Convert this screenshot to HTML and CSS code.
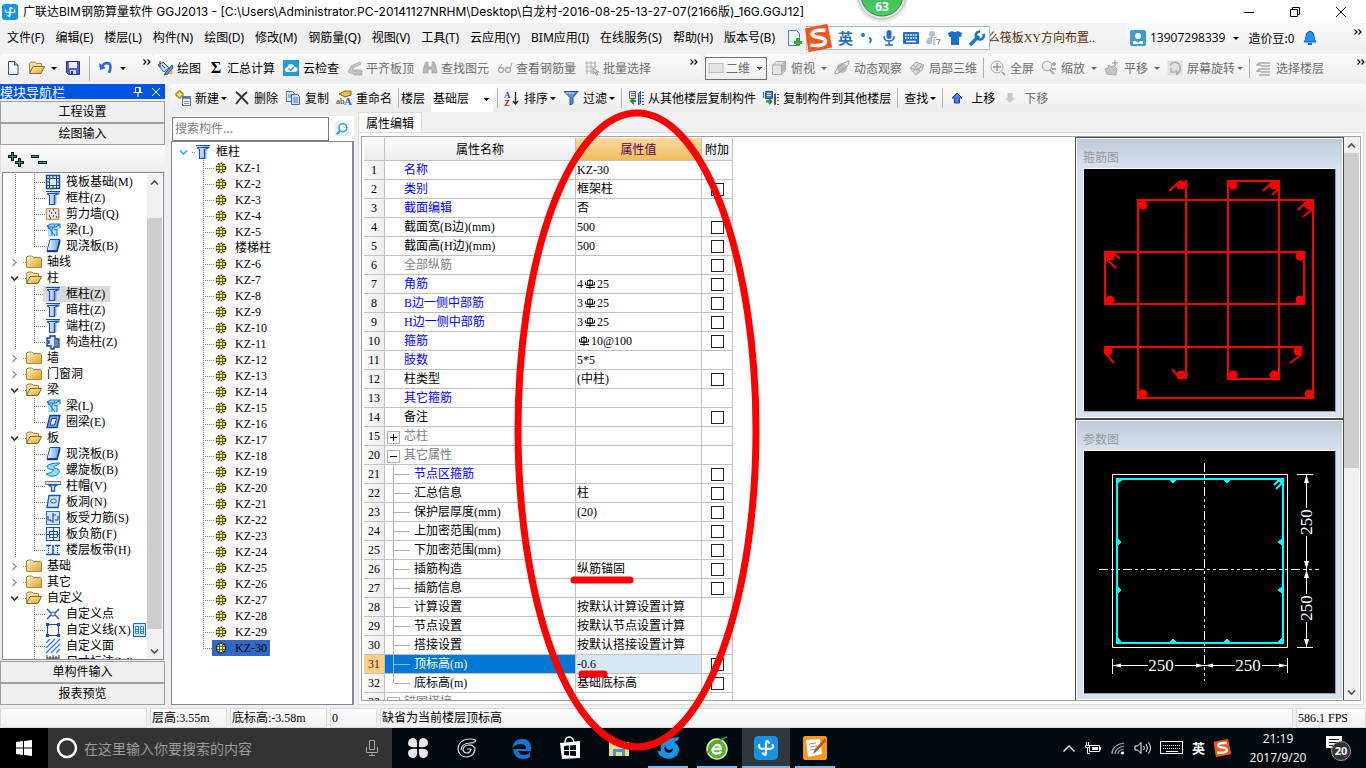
FILE: index.html
```html
<!DOCTYPE html>
<html lang="zh-CN">
<head>
<meta charset="utf-8">
<title>广联达BIM钢筋算量软件 GGJ2013</title>
<link rel="stylesheet" href="styles.css">
</head>
<body>
<svg class="defs" aria-hidden="true">
  <defs>
    <linearGradient id="gBlue" x1="0" x2="1"><stop offset="0" stop-color="#fff"/><stop offset="1" stop-color="#5b97ee"/></linearGradient>
    <linearGradient id="gFold" x1="0" y1="0" x2="1" y2="1"><stop offset="0" stop-color="#fff3c4"/><stop offset="1" stop-color="#e0a020"/></linearGradient>
    <linearGradient id="gGreen" x1="0" y1="0" x2="0" y2="1"><stop offset="0" stop-color="#2fb84a"/><stop offset="1" stop-color="#4ccc62"/></linearGradient>
    <symbol id="i-app" viewBox="0 0 16 16"><rect width="16" height="16" rx="3" fill="#1593e8"/><path d="M10 4.500Q8 2 8 5V11Q8 14 6 11.500M3.500 6Q3 8.500 5.500 8.500H11Q13.500 8.500 12.500 6" fill="none" stroke="#fff" stroke-width="1.400" stroke-linecap="round"/></symbol>
    <symbol id="i-column" viewBox="0 0 16 16"><path d="M1.500 1.500h13v3h-3v10h-7v-10h-3z" fill="url(#gBlue)"/><path d="M1 1.500h14M2 3.500h12M4.500 5v9.500h5V5M4 5l-2-1.500M10.500 5l3-1.500" fill="none" stroke="#1c50a4" stroke-width="1.200"/></symbol>
    <symbol id="i-raft" viewBox="0 0 16 16"><rect x="1.500" y="1.500" width="13" height="13" fill="#e6f2ff" stroke="#0d478d" stroke-width="1.500"/><path d="M4.500 2v12M11.500 2v12M2 4.500h12M2 11.500h12M8 2v3M8 11v3M2 8h3M11 8h3" stroke="#0d478d"/></symbol>
    <symbol id="i-wall" viewBox="0 0 16 16"><path d="M1.500 2.500h12v11h-12z" fill="#e2e2e2" stroke="#d8894c"/><path d="M13 5h2M13 8h2M13 11h2" stroke="#b55a20"/><path d="M4 5h1M8 4h1M6 7h1M10 7h1M4 10h1M8 10h1M11 11h1M5 12h1" stroke="#333" stroke-width="1.300"/></symbol>
    <symbol id="i-beam" viewBox="0 0 16 16"><path d="M2 5l3-3h10v4l-3 2v6H9V8L6 14H3V6z" fill="#a9dcff"/><path d="M2 5l3-3h10v4M2 5h9l4-3M3 6l4 2v6M9 7l3 1v6M2 3l8 11M7 7l3-4" fill="none" stroke="#187cc8" stroke-width="1.100"/></symbol>
    <symbol id="i-slab" viewBox="0 0 16 16"><path d="M5 1.500h10l-3 11H2z" fill="url(#gBlue)" stroke="#164fae"/><path d="M2 13.500h10l3-11" fill="none" stroke="#0b3b8c" stroke-width="1.500"/></symbol>
    <symbol id="i-ring" viewBox="0 0 16 16"><path d="M5 1.500h10l-3 12H2z" fill="#76a8ee" stroke="#0e3f96" stroke-width="1.300"/><path d="M7 4.500h4.500l-2 6.500H5z" fill="#fff" stroke="#0e3f96"/></symbol>
    <symbol id="i-spiral" viewBox="0 0 16 16"><path d="M15 1Q5 1 2 4Q1 7 9 8Q7 11 1 12Q6 16 12 13Q16 9 13 7Q7 6 9 4Q12 4 15 1z" fill="#8fdcff" stroke="#127cbc"/></symbol>
    <symbol id="i-cap" viewBox="0 0 16 16"><path d="M0 3.500h16v3H0z" fill="#ddd" stroke="#777"/><path d="M4 7h8l-2.500 2v4h-3V9z" fill="#fff" stroke="#1c50c0" stroke-width="1.400"/></symbol>
    <symbol id="i-hole" viewBox="0 0 16 16"><path d="M4 1.500h11l-2 12H2z" fill="#cfe0fb" stroke="#164fae" stroke-width="1.300"/><ellipse cx="8.500" cy="7" rx="2.800" ry="2" fill="#fff" stroke="#164fae"/></symbol>
    <symbol id="i-rebar" viewBox="0 0 16 16"><rect x="1.500" y="1.500" width="13" height="13" fill="#d6e5fb" stroke="#3a6fc8"/><path d="M3 6v4h3M8 3v10M13 6v4h-3M8 5h3M5 11h3" fill="none" stroke="#164fae" stroke-width="1.200"/></symbol>
    <symbol id="i-neg" viewBox="0 0 16 16"><rect x="1.500" y="1.500" width="13" height="13" fill="#e6f0ff" stroke="#164fae"/><path d="M8.500 2v12M4.500 5v6M12.500 5v6M4 5.500h8M2 8.500h12M4 11.500h8" stroke="#164fae"/></symbol>
    <symbol id="i-band" viewBox="0 0 16 16"><path d="M1 3h14v10H1z" fill="#e6f0ff"/><path d="M1 12.500h14M8 3v10M1 3.500h5M10 3.500h5" stroke="#164fae" stroke-width="1.500"/><path d="M3.500 4v9M12.500 4v9" stroke="#164fae" stroke-dasharray="1 1"/></symbol>
    <symbol id="i-struct" viewBox="0 0 16 16"><path d="M5 2h5v3h4v2h-2v2h2v4H9v2H6v-3H2V9h2V7H2V4h3z" fill="#d6e6ff" stroke="#0f3d86" stroke-width="1.300"/><path d="M9 6v6h4V6z" fill="#5b87cc"/></symbol>
    <symbol id="i-pt" viewBox="0 0 16 16"><path d="M2 3l4 4M14 3l-4 4M2 13l4-4M14 13l-4-4" stroke="#164fae" stroke-width="1.400"/><circle cx="8" cy="8" r="2" fill="none" stroke="#164fae"/></symbol>
    <symbol id="i-line" viewBox="0 0 16 16"><rect x="2.500" y="2.500" width="11" height="11" fill="#fff" stroke="#164fae"/><path d="M1 1h3v3H1zM12 1h3v3h-3zM1 12h3v3H1zM12 12h3v3h-3z" fill="#164fae"/></symbol>
    <symbol id="i-hatch" viewBox="0 0 16 16"><path d="M1 5l4-4M1 10l9-9M1 15L15 1M6 15l9-9M11 15l4-4" stroke="#3273cf" stroke-width="1.200"/></symbol>
    <symbol id="i-dim" viewBox="0 0 16 16"><path d="M2 1v8M14 1v8M2 4h12M5 2v5M8 1v8M11 2v5" stroke="#333"/></symbol>
    <symbol id="i-folder" viewBox="0 0 16 16"><path d="M.5 3.500L2 2h4l1.500 1.500h7L15.500 5v8.500H.5z" fill="url(#gFold)" stroke="#a8843c"/></symbol>
    <symbol id="i-fopen" viewBox="0 0 16 16"><path d="M.5 12.500V3.500L2 2h4l1.500 1.500h5V6" fill="#f7dc8a" stroke="#a8843c"/><path d="M.5 13.500L4 6.500h11.500L12 13.500z" fill="url(#gFold)" stroke="#8d6a24"/></symbol>
    <symbol id="i-gear" viewBox="0 0 12 12"><circle cx="6" cy="6" r="4" fill="#f2e81c"/><circle cx="6" cy="6" r="4.700" fill="none" stroke="#111" stroke-width="1.400" stroke-dasharray="1.700 1.300"/><path d="M4.500 2v8M7.500 2v8M2 4.500h8M2 7.500h8" stroke="#4a4610" stroke-width=".8"/><path d="M5 5h2v2H5z" fill="#fff"/></symbol>
    <symbol id="i-right" viewBox="0 0 9 9"><path d="M2.500 1L6 4.500 2.500 8" fill="none" stroke="#999" stroke-width="1.500"/></symbol>
    <symbol id="i-down" viewBox="0 0 9 9"><path d="M1 2.500L4.500 6 8 2.500" fill="none" stroke="currentColor" stroke-width="1.700"/></symbol>
    <symbol id="i-up" viewBox="0 0 9 9"><path d="M1 6.500L4.500 3 8 6.500" fill="none" stroke="#505050" stroke-width="1.700"/></symbol>
    <symbol id="i-more" viewBox="0 0 8 6"><path d="M.5.5L3 3 .5 5.500M4.500.5L7 3 4.500 5.500" fill="none" stroke="#000" stroke-width="1.200"/></symbol>
    <symbol id="i-new" viewBox="0 0 16 16"><path d="M3.500 1.500h6l3.500 3.500v9.500H3.500z" fill="#f3f8ff" stroke="#3c4a66"/><path d="M9.500 1.500V5H13" fill="#b9cdea" stroke="#3c4a66"/></symbol>
    <symbol id="i-save" viewBox="0 0 16 16"><path d="M1.500 1.500h13v13h-11l-2-2z" fill="#4d5fd0" stroke="#28338c"/><path d="M4 2h8v6H4z" fill="#eef"/><path d="M5 10h6v4H5z" fill="#d5d8e8"/><path d="M6 11h2v3H6z" fill="#28338c"/></symbol>
    <symbol id="i-undo" viewBox="0 0 16 16"><path d="M4 6Q7 2 11 3.500Q14 6 11 13" fill="none" stroke="#2f6bd0" stroke-width="2.600"/><path d="M1 3l1 7 6-2z" fill="#2f6bd0"/></symbol>
    <symbol id="i-paint" viewBox="0 0 16 16"><path d="M1 5l5-3 6 6-5 4z" fill="#c8d8ee" stroke="#36557f"/><path d="M3 1v6M5 5l3 3" stroke="#333"/><path d="M15 5l-6 7-2 3 4-1 5-6z" fill="#5d9be6" stroke="#24559a"/><path d="M12 13l3-3 1 3-2 2z" fill="#e9b633"/></symbol>
    <symbol id="i-cloud" viewBox="0 0 16 16"><rect width="16" height="16" fill="#2698e0"/><path d="M4 12Q1 11 2 8.500 3 7 4.500 7 5 4 8 4q3 0 3.500 3Q15 7 14.500 10 14 12 12 12z" fill="#fff"/><path d="M5.500 8.500l2 2L11 7" fill="none" stroke="#2698e0" stroke-width="1.300"/></symbol>
    <symbol id="g-flush" viewBox="0 0 16 16"><path d="M1 12l3-6 9-4 1 2-8 4v6zM7 10h8v2H7zM7 13h8v2H7z" fill="#c6c6c6" stroke="#a8a8a8" stroke-width=".8"/></symbol>
    <symbol id="g-find" viewBox="0 0 16 16"><path d="M2 7l2-5h2v5h4V2h2l2 5 1 6h-5V9H6v4H1z" fill="#bbb" stroke="#999" stroke-width=".7"/></symbol>
    <symbol id="g-glass" viewBox="0 0 16 16"><circle cx="4" cy="10" r="2.500" fill="none" stroke="#aaa" stroke-width="1.300"/><circle cx="11" cy="10" r="2.500" fill="none" stroke="#aaa" stroke-width="1.300"/><path d="M6 10h3M2 8l3-4M13 9l2-6" stroke="#aaa"/></symbol>
    <symbol id="g-batch" viewBox="0 0 16 16"><path d="M1 3h11M1 7h11M1 11h7M3 1v13M7 1v13M11 1v7" stroke="#b0b0b0"/><path d="M9 8l6 4-3 0 2 3-2 0-1-3-2 2z" fill="#ddd" stroke="#999"/></symbol>
    <symbol id="g-rect" viewBox="0 0 16 16"><rect x="1" y="3.500" width="14" height="9" fill="#e4e4e4" stroke="#bbb"/></symbol>
    <symbol id="g-cube" viewBox="0 0 16 16"><path d="M1.500 5l4-3.500h9v9l-4 4h-9z" fill="#e4e4e4" stroke="#aaa"/><path d="M1.500 5h9v9.500M10.500 5l4-3.500" fill="none" stroke="#aaa"/><path d="M11 5l3-3v8l-3 3z" fill="#b8b8b8"/></symbol>
    <symbol id="g-orbit" viewBox="0 0 16 16"><circle cx="8" cy="8" r="5" fill="#bcbcbc"/><path d="M1 14Q0 11 6 6t9-5Q16 4 10 9T1 14z" fill="none" stroke="#989898"/></symbol>
    <symbol id="g-local" viewBox="0 0 16 16"><path d="M1 8l6-6 8 3-2 5-6 5z" fill="#ddd" stroke="#aaa"/><path d="M4 5l7 6M10 3l-6 9M13 4l-5 9M2 8l6 2 6-4" fill="none" stroke="#aaa"/></symbol>
    <symbol id="g-full" viewBox="0 0 16 16"><circle cx="7" cy="7" r="6" fill="#eee" stroke="#aaa"/><path d="M7 3v8M3 7h8M12 12l3 3" stroke="#999" stroke-width="1.500"/></symbol>
    <symbol id="g-zoom" viewBox="0 0 16 16"><circle cx="6" cy="6" r="4.700" fill="#eee" stroke="#b0b0b0" stroke-width="1.300"/><path d="M9 10l4 4M11 4h4M13 2v4M11 9h4" stroke="#aaa" stroke-width="1.800"/></symbol>
    <symbol id="g-pan" viewBox="0 0 16 16"><path d="M3 14l-2-5 3-1 1-3 2 2 3-1 3 3-1 6z" fill="#c4c4c4" stroke="#aaa"/><path d="M11 0v6M8 3h6" stroke="#999"/></symbol>
    <symbol id="g-rot" viewBox="0 0 16 16"><rect x=".5" y=".5" width="15" height="15" fill="#e2e2e2"/><path d="M3 5Q7 0 12 4 15 9 11 13M13 11l-3 3-1-4M4 8v4h4" fill="none" stroke="#aaa" stroke-width="1.500"/></symbol>
    <symbol id="g-floors" viewBox="0 0 16 16"><path d="M3 3h11M5 6h9M3 9h11M5 12h9M3 15h11M3 3L1 5h4M3 9l-2 2h4" stroke="#aaa" fill="none" stroke-width="1.300"/></symbol>
    <symbol id="i-add" viewBox="0 0 16 16"><path d="M3 1h3v2h2v3H6v2H3V6H1V3h2z" fill="#ffe36b" stroke="#94700c"/><path d="M7.500 6.500h8v9h-8z" fill="#fff" stroke="#5472a8"/><path d="M8 7h7v2H8z" fill="#4c83d8"/><path d="M9 11.500h5M9 13.500h5" stroke="#89a"/></symbol>
    <symbol id="i-del" viewBox="0 0 16 16"><path d="M2 2Q7 6 14 14M13 2Q8 6 2 14" fill="none" stroke="#333" stroke-width="1.900"/></symbol>
    <symbol id="i-copy" viewBox="0 0 16 16"><path d="M1.500 1.500h6l2 2v8h-8z" fill="#e9f2ff" stroke="#4a78bb"/><path d="M6.500 4.500h6l2 2v8h-8z" fill="#cfe1fa" stroke="#3567b4"/><path d="M3 5h3M3 7h3M8 8h5M8 10h5M8 12h5" stroke="#4a78bb"/></symbol>
    <symbol id="i-ren" viewBox="0 0 16 16"><path d="M3 4l6-3h6v4l-6 2z" fill="#e8c144" stroke="#83650f"/><text x="0" y="14" font-family="Liberation Serif" font-size="9" fill="#222">ab</text><text x="8" y="15" font-family="Liberation Serif" font-size="11" font-weight="bold" fill="#2a62c4">A</text></symbol>
    <symbol id="i-sort" viewBox="0 0 16 16"><text x="0" y="8" font-family="Liberation Serif" font-size="9" font-weight="bold" fill="#2449a8">A</text><text x="0" y="16" font-family="Liberation Serif" font-size="9" font-weight="bold" fill="#a11c2c">Z</text><path d="M11.500 2v11M9 11l2.500 3 2.500-3" fill="none" stroke="#222" stroke-width="1.300"/></symbol>
    <symbol id="i-filter" viewBox="0 0 16 16"><path d="M1 1.500h14l-5 6v6l-3 1.500V7.500z" fill="#5b8eea" stroke="#2350a8"/><path d="M3 3h8" stroke="#cfe0ff"/></symbol>
    <symbol id="i-from" viewBox="0 0 16 16"><path d="M1.500 1.500h6v7h-6z" fill="#e0e4ea" stroke="#667"/><path d="M3 3.500h4M3 5.500h4" stroke="#778"/><path d="M10.500 3.500l2-2v12l-2 1zM14 2.500h2M14 5.500h2M14 8.500h2M14 11.500h2M14 14.500h2" fill="#7fa4e6" stroke="#2d53a0"/><path d="M8 11H4M6 8l-3 3 3 3" fill="none" stroke="#23903a" stroke-width="1.800"/></symbol>
    <symbol id="i-to" viewBox="0 0 16 16"><path d="M2.500 1.500h7v7h-7z" fill="#4c79cf" stroke="#2a4c94"/><path d="M4 3.500h4M4 5.500h4" stroke="#dfe9fb"/><path d="M.5 2v6M11.500 4.500l1-1v11l-1 0zM14 4.500h2M14 7.500h2M14 10.500h2M14 14.500h2" fill="#8b98ac" stroke="#4c5a70"/><path d="M3 11.500h5M6 9l2.500 2.500L6 14" fill="none" stroke="#23903a" stroke-width="1.800"/></symbol>
    <symbol id="i-mup" viewBox="0 0 12 12"><path d="M6 1l5 5H8.500v5h-5V6H1z" fill="#4a7ee8" stroke="#1a3f9c"/></symbol>
    <symbol id="i-mdn" viewBox="0 0 12 12"><path d="M6 11l5-5H8.500V1h-5v5H1z" fill="#c8c8c8"/></symbol>
    <symbol id="i-mag" viewBox="0 0 16 16"><rect width="16" height="16" fill="#dff0fc"/><circle cx="9" cy="6.500" r="4.500" fill="#fff" stroke="#3f9bdc" stroke-width="1.800"/><path d="M6 10l-4 4" stroke="#3f9bdc" stroke-width="2.400"/></symbol>
    <symbol id="i-s" viewBox="0 0 26 26"><path d="M2 5L21 1l4 20-20 4z" fill="#f2561d" stroke="#f2561d" stroke-width="2" stroke-linejoin="round"/><path d="M20 6Q8 5 7.500 9.500 8 12 14 12.500 21 13.500 19.500 17.500 17 21 6 19.500" fill="none" stroke="#fff" stroke-width="3.500"/></symbol>
    <symbol id="i-mark" viewBox="0 0 12 10"><path d="M3.500 1.500h5v5h-5zM6 0v10M2 8.500h9M1.500 3v3h9V3" fill="none" stroke="#000" stroke-width=".9"/></symbol>
  </defs>
</svg>

<header class="titlebar">
  <svg class="i16"><use href="#i-app"/></svg>
  <h1>广联达BIM钢筋算量软件 GGJ2013 - [C:\Users\Administrator.PC-20141127NRHM\Desktop\白龙村-2016-08-25-13-27-07(2166版)_16G.GGJ12]</h1>
  <div class="winbtns">
    <button aria-label="最小化"><svg width="12" height="12"><path d="M1 6.500h10" stroke="#000"/></svg></button>
    <button aria-label="还原"><svg width="12" height="12" fill="none" stroke="#000"><path d="M1.500 3.500h7v7h-7zM3.500 3.500v-2h7v7h-2"/></svg></button>
    <button aria-label="关闭"><svg width="12" height="12"><path d="M1 1l10 10M11 1L1 11" stroke="#000"/></svg></button>
  </div>
  <svg class="score" width="54" height="24"><circle cx="27" cy="-4" r="26" fill="#999" opacity=".25"/><circle cx="27" cy="-5" r="24" fill="#e6e6e6" stroke="#bbb"/><circle cx="27" cy="-5" r="21" fill="url(#gGreen)" stroke="#3b7f48"/><text x="27" y="11" text-anchor="middle">63</text></svg>
</header>

<div class="menubar">
  <nav class="menu">
    <button>文件(F)</button><button>编辑(E)</button><button>楼层(L)</button><button>构件(N)</button><button>绘图(D)</button><button>修改(M)</button><button>钢筋量(Q)</button><button>视图(V)</button><button>工具(T)</button><button>云应用(Y)</button><button>BIM应用(I)</button><button>在线服务(S)</button><button>帮助(H)</button><button>版本号(B)</button>
    <svg class="i16" viewBox="0 0 16 16"><path d="M2.500.5h8l3 3v12h-11z" fill="#eaf5ff" stroke="#3f86bb"/><path d="M10 8h3v3h3v3h-3v2h-3v-2H8v-3h2z" fill="#3faa28"/></svg>
  </nav>
  <a class="tip" href="#">么筏板XY方向布置..</a>
  <div class="user">
    <svg class="i16" viewBox="0 0 16 16"><rect width="16" height="16" rx="2" fill="#3f9bc9"/><circle cx="8" cy="6" r="3" fill="#fff"/><path d="M3 14V11h3l2 2 2-2h3v3z" fill="#fff"/></svg>
    <button class="phone">13907298339</button><i class="caret"></i>
    <span class="beans">造价豆:0</span>
    <svg class="i16" viewBox="0 0 16 16"><path d="M2 12Q4 10 4 6 4 2 8 1q4 1 4 5 0 4 2 6z" fill="#1e90ff" stroke="#0d5fc0"/><path d="M6 14h4" stroke="#1e70d0" stroke-width="2"/></svg>
    <svg class="more"><use href="#i-more"/></svg>
  </div>
  <div class="ime">
    <svg class="ime-logo"><use href="#i-s"/></svg>
    <b>英</b>
    <svg class="i16" viewBox="0 0 16 16"><circle cx="4" cy="5" r="2" fill="#1c70c8"/><path d="M10 8q3 0 1 5" fill="none" stroke="#1c70c8" stroke-width="2"/></svg>
    <svg class="i16" viewBox="0 0 16 16"><rect x="5.500" width="5" height="9" rx="2.500" fill="#1c70c8"/><path d="M3 6q0 5 5 5t5-5M8 11v4M4 15h8" fill="none" stroke="#1c70c8" stroke-width="1.500"/></svg>
    <svg class="i16" viewBox="0 0 16 16"><rect y="2" width="16" height="12" rx="1" fill="#1c70c8"/><path d="M2 5h12M2 8h12" stroke="#fff" stroke-width="1.600" stroke-dasharray="1.600 1"/><path d="M3 11.500h10" stroke="#fff" stroke-width="1.500"/></svg>
    <svg class="i16" viewBox="0 0 16 16"><circle cx="7" cy="4" r="3" fill="#aebfdc"/><path d="M1 13q0-6 6-6t6 2v5H3z" fill="#aebfdc"/><rect x="7" y="8" width="9" height="7" fill="#fff"/><path d="M9 9v6M11 9.500h4l-2 5" fill="none" stroke="#8aa0c4" stroke-width="1.200"/></svg>
    <svg class="i16" viewBox="0 0 16 16"><path d="M1 3l4-2q3 2 6 0l4 2-1 4h-2v8H4V7H2z" fill="#1c70c8"/></svg>
    <svg class="i16" viewBox="0 0 16 16"><path d="M2 14l7-7" stroke="#1c70c8" stroke-width="3.200" stroke-linecap="round"/><path d="M14.500 4A4 4 0 1 1 11 1.500" fill="none" stroke="#1c70c8" stroke-width="2.600"/></svg>
  </div>
</div>

<div class="toolbar">
  <div class="group g-file">
    <button class="tb" aria-label="新建"><svg class="i16"><use href="#i-new"/></svg></button>
    <button class="tb" aria-label="打开"><svg class="i16"><use href="#i-fopen"/></svg><i class="caret"></i></button>
    <button class="tb" aria-label="保存"><svg class="i16"><use href="#i-save"/></svg></button>
    <i class="sep"></i>
    <button class="tb" aria-label="撤销"><svg class="i16"><use href="#i-undo"/></svg><i class="caret"></i></button>
    <svg class="more"><use href="#i-more"/></svg>
  </div>
  <div class="group g-tools">
    <button class="tb"><svg class="i16"><use href="#i-paint"/></svg>绘图</button>
    <button class="tb"><b class="sigma">Σ</b>汇总计算</button>
    <button class="tb"><svg class="i16"><use href="#i-cloud"/></svg>云检查</button>
    <button class="tb" disabled><svg class="i16"><use href="#g-flush"/></svg>平齐板顶</button>
    <button class="tb" disabled><svg class="i16"><use href="#g-find"/></svg>查找图元</button>
    <button class="tb" disabled><svg class="i16"><use href="#g-glass"/></svg>查看钢筋量</button>
    <button class="tb" disabled><svg class="i16"><use href="#g-batch"/></svg>批量选择</button>
    <svg class="more"><use href="#i-more"/></svg>
  </div>
  <div class="group g-view">
    <label class="viewsel"><svg class="i16"><use href="#g-rect"/></svg><select aria-label="视图" disabled><option>二维</option></select></label>
    <button class="tb" disabled><svg class="i16"><use href="#g-cube"/></svg>俯视<i class="caret wide"></i></button>
    <button class="tb" disabled><svg class="i16"><use href="#g-orbit"/></svg>动态观察</button>
    <button class="tb" disabled><svg class="i16"><use href="#g-local"/></svg>局部三维</button>
    <i class="sep"></i>
    <button class="tb" disabled><svg class="i16"><use href="#g-full"/></svg>全屏</button>
    <button class="tb" disabled><svg class="i16"><use href="#g-zoom"/></svg>缩放<i class="caret wide"></i></button>
    <button class="tb" disabled><svg class="i16"><use href="#g-pan"/></svg>平移<i class="caret wide"></i></button>
    <button class="tb" disabled><svg class="i16"><use href="#g-rot"/></svg>屏幕旋转<i class="caret"></i></button>
    <i class="sep"></i>
    <button class="tb" disabled><svg class="i16"><use href="#g-floors"/></svg>选择楼层</button>
    <svg class="more"><use href="#i-more"/></svg>
  </div>
</div>

<main class="main">
  <aside class="nav">
    <div class="nav-head"><h2>模块导航栏</h2>
      <svg width="12" height="12" fill="none" stroke="#fff"><path d="M3.500 1.500h5v5h-5zM7.500 2v4M1.500 6.500h9M6 7v4"/></svg>
      <svg width="12" height="12" stroke="#fff"><path d="M2 2l8 8M10 2l-8 8"/></svg>
    </div>
    <button class="bar">工程设置</button>
    <button class="bar">绘图输入</button>
    <div class="expand">
      <svg width="18" height="16"><path d="M1 5.500h9M5.500 1v9M8 11.500h9M12.500 7v9" stroke="#111" stroke-width="3"/><path d="M2 5.500h7M5.500 2v7M9 11.500h7M12.500 8v7" stroke="#1a9a92"/></svg>
      <svg width="18" height="16"><path d="M1 5.500h8M8 11.500h9" stroke="#111" stroke-width="3"/><path d="M2 5.500h6M9 11.500h7" stroke="#1a9a92"/></svg>
    </div>
    <div class="tree">
      <ul>
        <li class="leaf"><svg class="i16"><use href="#i-raft"/></svg>筏板基础(M)</li>
        <li class="leaf"><svg class="i16"><use href="#i-column"/></svg>框柱(Z)</li>
        <li class="leaf"><svg class="i16"><use href="#i-wall"/></svg>剪力墙(Q)</li>
        <li class="leaf"><svg class="i16"><use href="#i-beam"/></svg>梁(L)</li>
        <li class="leaf last"><svg class="i16"><use href="#i-slab"/></svg>现浇板(B)</li>
        <li class="node"><svg class="i9"><use href="#i-right"/></svg><svg class="i16"><use href="#i-folder"/></svg>轴线</li>
        <li class="node"><svg class="i9"><use href="#i-down"/></svg><svg class="i16"><use href="#i-fopen"/></svg>柱</li>
        <li class="leaf"><span class="cur"><svg class="i16"><use href="#i-column"/></svg>框柱(Z)</span></li>
        <li class="leaf"><svg class="i16"><use href="#i-column"/></svg>暗柱(Z)</li>
        <li class="leaf"><svg class="i16"><use href="#i-column"/></svg>端柱(Z)</li>
        <li class="leaf last"><svg class="i16"><use href="#i-struct"/></svg>构造柱(Z)</li>
        <li class="node"><svg class="i9"><use href="#i-right"/></svg><svg class="i16"><use href="#i-folder"/></svg>墙</li>
        <li class="node"><svg class="i9"><use href="#i-right"/></svg><svg class="i16"><use href="#i-folder"/></svg>门窗洞</li>
        <li class="node"><svg class="i9"><use href="#i-down"/></svg><svg class="i16"><use href="#i-fopen"/></svg>梁</li>
        <li class="leaf"><svg class="i16"><use href="#i-beam"/></svg>梁(L)</li>
        <li class="leaf last"><svg class="i16"><use href="#i-ring"/></svg>圈梁(E)</li>
        <li class="node"><svg class="i9"><use href="#i-down"/></svg><svg class="i16"><use href="#i-fopen"/></svg>板</li>
        <li class="leaf"><svg class="i16"><use href="#i-slab"/></svg>现浇板(B)</li>
        <li class="leaf"><svg class="i16"><use href="#i-spiral"/></svg>螺旋板(B)</li>
        <li class="leaf"><svg class="i16"><use href="#i-cap"/></svg>柱帽(V)</li>
        <li class="leaf"><svg class="i16"><use href="#i-hole"/></svg>板洞(N)</li>
        <li class="leaf"><svg class="i16"><use href="#i-rebar"/></svg>板受力筋(S)</li>
        <li class="leaf"><svg class="i16"><use href="#i-neg"/></svg>板负筋(F)</li>
        <li class="leaf last"><svg class="i16"><use href="#i-band"/></svg>楼层板带(H)</li>
        <li class="node"><svg class="i9"><use href="#i-right"/></svg><svg class="i16"><use href="#i-folder"/></svg>基础</li>
        <li class="node"><svg class="i9"><use href="#i-right"/></svg><svg class="i16"><use href="#i-folder"/></svg>其它</li>
        <li class="node"><svg class="i9"><use href="#i-down"/></svg><svg class="i16"><use href="#i-fopen"/></svg>自定义</li>
        <li class="leaf end"><svg class="i16"><use href="#i-pt"/></svg>自定义点</li>
        <li class="leaf end"><svg class="i16"><use href="#i-line"/></svg>自定义线(X)<svg class="pages" width="13" height="14"><path d="M.5.5h12v13H.5z" fill="#cfe6ff" stroke="#1668b8"/><path d="M2.500 3.500h3v7h-3zM7.500 3.500h3v7h-3z" fill="#fff" stroke="#1e88e5"/><path d="M3 6.500h2M3 8.500h2M8 6.500h2M8 8.500h2" stroke="#1e88e5"/></svg></li>
        <li class="leaf end"><svg class="i16"><use href="#i-hatch"/></svg>自定义面</li>
        <li class="leaf end"><svg class="i16"><use href="#i-dim"/></svg>尺寸标注(W)</li>
      </ul>
      <div class="sb sb-nav"><span class="cap"><svg class="i9"><use href="#i-up"/></svg></span><i class="pre"></i><i class="thumb"></i><i class="post"></i><span class="cap"><svg class="i9"><use href="#i-down"/></svg></span></div>
    </div>
    <button class="bar">单构件输入</button>
    <button class="bar">报表预览</button>
  </aside>

  <div class="work">
    <div class="toolbar2">
      <button class="tb"><svg class="i16"><use href="#i-add"/></svg>新建<i class="caret"></i></button>
      <button class="tb"><svg class="i16"><use href="#i-del"/></svg>删除</button>
      <button class="tb"><svg class="i16"><use href="#i-copy"/></svg>复制</button>
      <button class="tb"><svg class="i16"><use href="#i-ren"/></svg>重命名</button>
      <i class="sep"></i>
      <label class="floor">楼层<select><option>基础层</option></select></label>
      <i class="sep"></i>
      <button class="tb"><svg class="i16"><use href="#i-sort"/></svg>排序<i class="caret"></i></button>
      <button class="tb"><svg class="i16"><use href="#i-filter"/></svg>过滤<i class="caret"></i></button>
      <i class="sep"></i>
      <button class="tb"><svg class="i16"><use href="#i-from"/></svg>从其他楼层复制构件</button>
      <button class="tb"><svg class="i16"><use href="#i-to"/></svg>复制构件到其他楼层</button>
      <i class="sep"></i>
      <button class="tb">查找<i class="caret"></i></button>
      <i class="sep"></i>
      <button class="tb move"><svg class="i12"><use href="#i-mup"/></svg>上移</button>
      <button class="tb move" disabled><svg class="i12"><use href="#i-mdn"/></svg>下移</button>
    </div>

    <div class="panes">
      <section class="parts">
        <div class="search"><input type="text" placeholder="搜索构件..." aria-label="搜索构件"><button aria-label="搜索"><svg class="i14"><use href="#i-mag"/></svg></button></div>
        <ul class="partlist">
          <li class="root"><svg class="i9"><use href="#i-down"/></svg><svg class="i16"><use href="#i-column"/></svg>框柱</li>
          <li><span><svg class="i12"><use href="#i-gear"/></svg>KZ-1</span></li>
          <li><span><svg class="i12"><use href="#i-gear"/></svg>KZ-2</span></li>
          <li><span><svg class="i12"><use href="#i-gear"/></svg>KZ-3</span></li>
          <li><span><svg class="i12"><use href="#i-gear"/></svg>KZ-4</span></li>
          <li><span><svg class="i12"><use href="#i-gear"/></svg>KZ-5</span></li>
          <li><span><svg class="i12"><use href="#i-gear"/></svg>楼梯柱</span></li>
          <li><span><svg class="i12"><use href="#i-gear"/></svg>KZ-6</span></li>
          <li><span><svg class="i12"><use href="#i-gear"/></svg>KZ-7</span></li>
          <li><span><svg class="i12"><use href="#i-gear"/></svg>KZ-8</span></li>
          <li><span><svg class="i12"><use href="#i-gear"/></svg>KZ-9</span></li>
          <li><span><svg class="i12"><use href="#i-gear"/></svg>KZ-10</span></li>
          <li><span><svg class="i12"><use href="#i-gear"/></svg>KZ-11</span></li>
          <li><span><svg class="i12"><use href="#i-gear"/></svg>KZ-12</span></li>
          <li><span><svg class="i12"><use href="#i-gear"/></svg>KZ-13</span></li>
          <li><span><svg class="i12"><use href="#i-gear"/></svg>KZ-14</span></li>
          <li><span><svg class="i12"><use href="#i-gear"/></svg>KZ-15</span></li>
          <li><span><svg class="i12"><use href="#i-gear"/></svg>KZ-16</span></li>
          <li><span><svg class="i12"><use href="#i-gear"/></svg>KZ-17</span></li>
          <li><span><svg class="i12"><use href="#i-gear"/></svg>KZ-18</span></li>
          <li><span><svg class="i12"><use href="#i-gear"/></svg>KZ-19</span></li>
          <li><span><svg class="i12"><use href="#i-gear"/></svg>KZ-20</span></li>
          <li><span><svg class="i12"><use href="#i-gear"/></svg>KZ-21</span></li>
          <li><span><svg class="i12"><use href="#i-gear"/></svg>KZ-22</span></li>
          <li><span><svg class="i12"><use href="#i-gear"/></svg>KZ-23</span></li>
          <li><span><svg class="i12"><use href="#i-gear"/></svg>KZ-24</span></li>
          <li><span><svg class="i12"><use href="#i-gear"/></svg>KZ-25</span></li>
          <li><span><svg class="i12"><use href="#i-gear"/></svg>KZ-26</span></li>
          <li><span><svg class="i12"><use href="#i-gear"/></svg>KZ-27</span></li>
          <li><span><svg class="i12"><use href="#i-gear"/></svg>KZ-28</span></li>
          <li><span><svg class="i12"><use href="#i-gear"/></svg>KZ-29</span></li>
          <li class="last"><span class="sel"><svg class="i12"><use href="#i-gear"/></svg>KZ-30</span></li>
        </ul>
      </section>

      <section class="editor">
        <button class="tab">属性编辑</button>
        <div class="sheet">
          <div class="frame">
            <div class="gridwrap">
              <table class="props">
                <colgroup><col class="c-no"><col class="c-name"><col class="c-val"><col class="c-add"></colgroup>
                <thead><tr><th></th><th>属性名称</th><th class="hot">属性值</th><th>附加</th></tr></thead>
                <tbody>
                  <tr><th>1</th><td class="key">名称</td><td>KZ-30</td><td></td></tr>
                  <tr><th>2</th><td class="key">类别</td><td>框架柱</td><td><input type="checkbox" aria-label="附加 类别"></td></tr>
                  <tr><th>3</th><td class="key">截面编辑</td><td>否</td><td></td></tr>
                  <tr><th>4</th><td>截面宽(B边)(mm)</td><td>500</td><td><input type="checkbox" aria-label="附加 截面宽"></td></tr>
                  <tr><th>5</th><td>截面高(H边)(mm)</td><td>500</td><td><input type="checkbox" aria-label="附加 截面高"></td></tr>
                  <tr><th>6</th><td class="dim">全部纵筋</td><td></td><td><input type="checkbox" aria-label="附加 全部纵筋"></td></tr>
                  <tr><th>7</th><td class="key">角筋</td><td>4<svg class="mark"><use href="#i-mark"/></svg>25</td><td><input type="checkbox" aria-label="附加 角筋"></td></tr>
                  <tr><th>8</th><td class="key">B边一侧中部筋</td><td>3<svg class="mark"><use href="#i-mark"/></svg>25</td><td><input type="checkbox" aria-label="附加 B边一侧中部筋"></td></tr>
                  <tr><th>9</th><td class="key">H边一侧中部筋</td><td>3<svg class="mark"><use href="#i-mark"/></svg>25</td><td><input type="checkbox" aria-label="附加 H边一侧中部筋"></td></tr>
                  <tr><th>10</th><td class="key">箍筋</td><td><svg class="mark"><use href="#i-mark"/></svg>10@100</td><td><input type="checkbox" aria-label="附加 箍筋"></td></tr>
                  <tr><th>11</th><td class="key">肢数</td><td>5*5</td><td></td></tr>
                  <tr><th>12</th><td>柱类型</td><td>(中柱)</td><td><input type="checkbox" aria-label="附加 柱类型"></td></tr>
                  <tr><th>13</th><td class="key">其它箍筋</td><td></td><td></td></tr>
                  <tr><th>14</th><td>备注</td><td></td><td><input type="checkbox" aria-label="附加 备注"></td></tr>
                  <tr><th>15</th><td class="dim fold"><button aria-label="展开"><svg width="9" height="9"><path d="M1 4.500h7M4.500 1v7" stroke="#000"/></svg></button>芯柱</td><td></td><td></td></tr>
                  <tr><th>20</th><td class="dim fold"><button aria-label="收起"><svg width="9" height="9"><path d="M1 4.500h7" stroke="#000"/></svg></button>其它属性</td><td></td><td></td></tr>
                  <tr class="sub"><th>21</th><td class="key">节点区箍筋</td><td></td><td><input type="checkbox" aria-label="附加 节点区箍筋"></td></tr>
                  <tr class="sub"><th>22</th><td>汇总信息</td><td>柱</td><td><input type="checkbox" aria-label="附加 汇总信息"></td></tr>
                  <tr class="sub"><th>23</th><td>保护层厚度(mm)</td><td>(20)</td><td><input type="checkbox" aria-label="附加 保护层厚度"></td></tr>
                  <tr class="sub"><th>24</th><td>上加密范围(mm)</td><td></td><td><input type="checkbox" aria-label="附加 上加密范围"></td></tr>
                  <tr class="sub"><th>25</th><td>下加密范围(mm)</td><td></td><td><input type="checkbox" aria-label="附加 下加密范围"></td></tr>
                  <tr class="sub"><th>26</th><td>插筋构造</td><td>纵筋锚固</td><td><input type="checkbox" aria-label="附加 插筋构造"></td></tr>
                  <tr class="sub"><th>27</th><td>插筋信息</td><td></td><td><input type="checkbox" aria-label="附加 插筋信息"></td></tr>
                  <tr class="sub"><th>28</th><td>计算设置</td><td>按默认计算设置计算</td><td></td></tr>
                  <tr class="sub"><th>29</th><td>节点设置</td><td>按默认节点设置计算</td><td></td></tr>
                  <tr class="sub"><th>30</th><td>搭接设置</td><td>按默认搭接设置计算</td><td></td></tr>
                  <tr class="sub active"><th>31</th><td>顶标高(m)</td><td>-0.6</td><td><input type="checkbox" aria-label="附加 顶标高"></td></tr>
                  <tr class="sub subend"><th>32</th><td>底标高(m)</td><td>基础底标高</td><td><input type="checkbox" aria-label="附加 底标高"></td></tr>
                  <tr><th>33</th><td class="dim fold"><button aria-label="展开"><svg width="9" height="9"><path d="M1 4.500h7M4.500 1v7" stroke="#000"/></svg></button>锚固搭接</td><td></td><td></td></tr>
                </tbody>
              </table>
            </div>
            <div class="previews">
              <figure class="pv">
                <figcaption>箍筋图</figcaption>
                <svg viewBox="0 0 251 242">
                  <g fill="none" stroke="#f00" stroke-width="2"><path d="M54 31h175v198H54zM144 12h51v198h-51zM102 11v199M21 83h199v52H21zM20 178h198"/><path d="M85 22l9-8M179 22l8-8M188 26l6-6M214 41l8-8M219 48l9-8M30 84l6 6M23 91l9 8M21 184l9 10M218 185l-12 9M88 200l8 10"/></g>
                  <g fill="#f00"><circle cx="97" cy="16" r="4.500"/><circle cx="149" cy="16" r="4.500"/><circle cx="190" cy="16" r="4.500"/><circle cx="59" cy="36" r="4.500"/><circle cx="225" cy="36" r="4.500"/><circle cx="26" cy="87" r="4.500"/><circle cx="216" cy="87" r="4.500"/><circle cx="26" cy="131" r="4.500"/><circle cx="216" cy="131" r="4.500"/><circle cx="24" cy="182" r="4.500"/><circle cx="214" cy="182" r="4.500"/><circle cx="97" cy="206" r="4.500"/><circle cx="149" cy="206" r="4.500"/><circle cx="190" cy="206" r="4.500"/><circle cx="59" cy="225" r="4.500"/><circle cx="225" cy="225" r="4.500"/></g>
                </svg>
              </figure>
              <figure class="pv">
                <figcaption>参数图</figcaption>
                <svg viewBox="0 0 251 242">
                  <g fill="none" stroke="#fff"><path d="M28.500 23.500h175v173h-175z"/><path d="M120.500 12v218M15 118.500h220" stroke-dasharray="9 3 3 3 3 3"/><path d="M28.500 208v15M203.500 207v15M28 214.500h36M91 214.500h60M178 214.500h26M213 23.500h16M213 196.500h16M222.500 24v33M222.500 85v58M222.500 171v25"/></g>
                  <path d="M29 214.500l8-2v4zM120 214.500l-8-2v4zM121 214.500l8-2v4zM203 214.500l-8-2v4zM222.500 24l-2.500 8h5zM222.500 118l-2.500-8h5zM222.500 119l-2.500 8h5zM222.500 196l-2.500-8h5z" fill="#fff"/>
                  <path d="M33 28h166v164H33z" fill="none" stroke="#0ff" stroke-width="2"/>
                  <path d="M190 34l6-6M192 38l6-6" stroke="#0ff" stroke-width="2"/>
                  <path d="M34 28h5l-5 4zM198 28v5l-5-5zM34 192v-5l4 5zM198 192h-5l5-5zM86 29h6l-3 3zM140 29h6l-3 3zM86 191h6l-3-3zM140 191h6l-3-3zM34 88v6l3-3zM34 136v6l3-3zM198 88v6l-4-3zM198 136v6l-4-3z" fill="#0ff" stroke="#0ff"/>
                  <g class="dimtext"><text x="77" y="220">250</text><text x="164" y="220">250</text><text transform="translate(228 71) rotate(-90)">250</text><text transform="translate(228 157) rotate(-90)">250</text></g>
                </svg>
              </figure>
            </div>
            <div class="sb sb-pv"><span class="cap"><svg class="i9"><use href="#i-up"/></svg></span><i class="thumb"></i><i class="post"></i><span class="cap"><svg class="i9"><use href="#i-down"/></svg></span></div>
          </div>
        </div>
      </section>
    </div>
  </div>
</main>

<footer class="status"><span class="s1"></span><span class="s2">层高:3.55m</span><span class="s3">底标高:-3.58m</span><span class="s4">0</span><span class="s5">缺省为当前楼层顶标高</span><span class="s6">586.1 FPS</span></footer>

<div class="taskbar">
  <button class="start" aria-label="开始"><svg width="16" height="16" fill="#fff"><path d="M0 2l7-1v6.500H0zM8 1l8-1v7.500H8zM0 8.500h7V15l-7-1zM8 8.500h8V16l-8-1z"/></svg></button>
  <label class="cortana"><svg width="22" height="22"><circle cx="11" cy="11" r="9" fill="none" stroke="#fff" stroke-width="2.500"/></svg><input type="text" placeholder="在这里输入你要搜索的内容" aria-label="搜索"><svg width="12" height="18" fill="none" stroke="#aaa"><path d="M3.500 1.500h5v9h-5zM.5 8v5.500h11V8M6 14v3M3 16.500h6"/></svg></label>
  <div class="apps">
    <button aria-label="应用"><svg width="22" height="22" fill="#e8e8e8"><path d="M10 10Q2 11 1 7 1 1 6 1q5 0 4 9zM12 10Q11 2 15 1q6 0 6 5 0 5-9 4zM12 12q8-1 9 3 0 6-5 6-5 0-4-9zM10 12q1 8-3 9-6 0-6-5 0-5 9-4z"/></svg></button>
    <button aria-label="应用"><svg width="22" height="22" fill="none" stroke="#ddd" stroke-width="1.200"><path d="M20 3Q14 1 8 3 2 6 2 12q1 8 9 8 8-1 8-9-3-4-7-3-5 1-5 5 1 3 4 3 3 0 4-4h-4M20 3q-1 3-6 3-8 0-9 7"/></svg></button>
    <button class="far" aria-label="Edge"><svg width="22" height="22"><path d="M3 12h13q0-5-5-5-5 0-9 4Q4 2 12 2q9 0 9 9v3H8q1 4 5 4 4 0 7-2v4q-3 2-8 2-8-1-9-10z" fill="#0f78d4"/></svg></button>
    <button aria-label="商店"><svg width="22" height="24"><path d="M1 7l20-2v17l-18 1z" fill="#fff"/><path d="M6 7Q6 1 10 1t5 5" fill="none" stroke="#fff" stroke-width="1.400"/><path d="M5 10l5-.5v4.500H5zM11 9.500l6-.5v5h-6zM5 15h5v4.500L5 19zM11 15h6v5l-6-.5z" fill="#000a0e"/></svg></button>
    <button aria-label="资源管理器"><svg width="22" height="20"><path d="M1 2h7l2 2h11v14H1z" fill="#f8d775"/><path d="M5 18v-7h12v7h-3v-4H8v4z" fill="#2f9fe0"/></svg></button>
    <button class="run" aria-label="应用"><svg width="24" height="24"><path d="M23 1q0 4-5 5 5 3 5 8-1 8-10 9-10-1-12-9 2 2 4 1-2-8 5-11 7-3 13-3zM9 9q-2 8 4 8 4-1 4-5l-3 2q-4 0-5-5z" fill="#1794e8" fill-rule="evenodd"/></svg></button>
    <button class="run" aria-label="浏览器"><svg width="24" height="24"><circle cx="12" cy="13" r="10" fill="#57b327" stroke="#dff0c8" stroke-width="1.500"/><path d="M7 13h9q0-4-4-4t-4.500 4.500Q8 18 12 17.500q3 0 4-2" fill="none" stroke="#fff" stroke-width="2.400"/><path d="M2 17Q10 5 22 1" fill="none" stroke="#4fa524" stroke-width="1.500"/></svg></button>
    <button class="run on" aria-label="广联达"><svg width="24" height="24"><use href="#i-app"/></svg></button>
    <button class="run" aria-label="便笺"><svg width="24" height="24"><rect width="24" height="24" rx="2" fill="#f39a1c"/><path d="M3 4l14-1 2 15-14 3z" fill="#fff"/><path d="M6 8l7-1M7 11l7-1M7 14l6-1" stroke="#999"/><path d="M22 2L12 13l-2 5 4-3L23 5z" fill="#b65a12"/></svg></button>
  </div>
  <div class="tray">
    <svg width="14" height="12"><path d="M1.500 9.500L7 4l5.500 5.500" fill="none" stroke="#fff" stroke-width="1.300"/></svg>
    <svg width="18" height="14" fill="none" stroke="#fff"><path d="M5.500 4.500h10v6h-10zM16.500 6v3M2.500 1v3M4.500 1v3M1.500 4.500h4v2h-4zM3.500 7v5.500H6"/><path d="M8 6h6v3H8z" fill="#fff" stroke="none"/></svg>
    <svg width="16" height="14" fill="none" stroke="#aaa" stroke-width="1.200"><path d="M2 13Q2 4 14 2M5 13Q5 7 14 5M8 13q0-4 6-5M11 13q0-2 3-2"/><circle cx="12.500" cy="12" r="1.500" fill="#fff" stroke="none"/></svg>
    <svg width="18" height="14" fill="none" stroke="#fff"><path d="M1 5h2.500L7 1.500v11L3.500 9H1zM9.500 5q2 2 0 4M12 3q3 4 0 8M14.500 1.500q4 5.500 0 11"/></svg>
    <svg width="24" height="14" fill="none" stroke="#fff"><rect x=".5" y=".5" width="22" height="12"/><path d="M3 4.500h18M3 7.500h18" stroke-dasharray="1 1"/><path d="M6 10.500h12"/></svg>
    <b>英</b>
    <svg width="18" height="18"><use href="#i-s"/></svg>
    <time><span>21:19</span><span>2017/9/20</span></time>
    <svg class="note" width="28" height="26"><path d="M1 1h16v12h-5l-4 4v-4H1z" fill="#fff"/><path d="M4 4.500h10M4 7.500h10M4 10.500h6" stroke="#111"/><circle cx="16" cy="16" r="9.500" fill="#333" stroke="#999"/><text x="16" y="20" text-anchor="middle">20</text></svg>
  </div>
</div>

<svg class="ink" width="1366" height="768" aria-hidden="true"><g fill="none" stroke="#f00" stroke-width="7" stroke-linecap="round"><ellipse cx="637" cy="430" rx="119" ry="317"/><path d="M574 580h56M582 674h22"/></g></svg>
</body>
</html>
```
FILE: styles.css
```css
:root {
  --ui: "Noto Sans CJK SC", "Noto Sans", sans-serif;
  --song: "Liberation Serif", "Noto Sans CJK SC", serif;
  --dots-v: repeating-linear-gradient(to bottom, #808080 0 1px, transparent 1px 2px);
  --dots-h: repeating-linear-gradient(to right, #808080 0 1px, transparent 1px 2px);
}
* { box-sizing: border-box; }
body {
  margin: 0;
  height: 100vh;
  display: flex;
  flex-direction: column;
  position: relative;
  overflow: hidden;
  background: #f0f0f0;
  font: 12px/16px var(--ui);
  color: #000;
}
button, input, select { font: inherit; color: inherit; margin: 0; padding: 0; border: 0; background: none; border-radius: 0; }
button { white-space: nowrap; }
h1, h2, ul, figure { margin: 0; padding: 0; font: inherit; list-style: none; }
svg { flex: none; display: block; }
.defs { position: absolute; width: 0; height: 0; }
.i16 { width: 16px; height: 16px; }
.i14 { width: 14px; height: 14px; }
.i12 { width: 12px; height: 12px; }
.i9 { width: 9px; height: 9px; }
.more { width: 8px; height: 6px; margin-bottom: 12px; }
.caret { flex: none; border: 3px solid transparent; border-top-color: currentColor; border-bottom: 0; }
.sep { width: 1px; height: 20px; background: #b0b0b0; flex: none; }

/* title and menu */
.titlebar { position: relative; display: flex; align-items: center; height: 23px; padding-left: 2px; background: #fff; flex: none; }
.titlebar h1 { margin-left: 5px; font-family: Inter, "Noto Sans CJK SC", sans-serif; white-space: nowrap; }
.winbtns { margin-left: auto; margin-right: 2px; display: flex; }
.winbtns button { width: 46px; height: 22px; display: grid; place-items: center; }
.score { position: absolute; left: 855px; top: 0; }
.score text { fill: #fff; font: bold 12px "Noto Sans", sans-serif; }
.menubar { position: relative; display: flex; height: 30px; flex: none; }
.menu { display: flex; align-items: center; gap: 11px; padding-left: 7px; font-family: "Noto Sans", "Noto Sans CJK SC", sans-serif; }
.tip { flex: 1; padding: 7px 30px 0 0; text-align: right; color: #5a2d00; text-decoration: none; font-family: var(--song); background: linear-gradient(#f4f4f4, #f0f0f0); }
.user { display: flex; align-items: center; width: 241px; padding-left: 5px; background: linear-gradient(#fbfbfb, #eee); border-radius: 4px; }
.phone { margin-left: 4px; font-family: "Open Sans", sans-serif; }
.user .caret { margin: 0 9px 0 8px; }
.beans { margin-right: 8px; }
.user .more { margin-left: auto; margin-right: 4px; }
.ime { position: absolute; left: 806px; top: 3px; width: 184px; height: 24px; display: flex; align-items: center; gap: 6px; border: 1px solid #a9bdd3; background: #fff; color: #1c70c8; }
.ime b { font-size: 15px; }
.ime-logo { width: 28px; height: 28px; margin-left: -3px; }

/* toolbars */
.toolbar { display: flex; height: 30px; padding: 1px 0; flex: none; }
.group { display: flex; align-items: center; gap: 8px; background: linear-gradient(#fcfcfc, #ededed); border-radius: 4px; }
.group .more { margin-left: auto; }
.g-file { width: 153px; padding: 0 2px 0 5px; }
.g-file .tb { gap: 6px; }
.g-tools { width: 548px; padding: 0 3px 0 4px; }
.g-tools .tb:disabled { gap: 3px; }
.g-view { flex: 1; margin-left: 3px; padding: 0 1px; gap: 7px; }
.g-view .sep { margin: 0 -1px; }
.tb { display: flex; align-items: center; gap: 4px; height: 22px; flex: none; }
.tb:disabled { color: #6d6d6d; }
.g-view .caret, .toolbar2 .caret { margin-left: -2px; }
.g-view .caret.wide { margin-left: 2px; }
.g-file .sep { height: 25px; }
.sigma { width: 14px; font: bold 16px/16px "Liberation Serif", serif; }
.viewsel { display: flex; align-items: center; gap: 2px; width: 62px; height: 23px; padding-left: 2px; border: 1px solid #707070; flex: none; margin-right: -3px; }
select { appearance: none; }
.viewsel select { flex: 1; min-width: 0; height: 20px; opacity: 1; color: #6d6d6d; background: linear-gradient(#555, #555) no-repeat right 4px top 9px / 5px 1px, linear-gradient(#555, #555) no-repeat right 5px top 10px / 3px 1px, linear-gradient(#555, #555) no-repeat right 6px top 11px / 1px 1px; }
.toolbar2 { display: flex; align-items: center; gap: 7px; height: 28px; padding-left: 4px; background: linear-gradient(#fdfdfd, #ececec); border-radius: 4px; flex: none; }
.toolbar2 .sep { margin: 0 -1px; }
.floor { display: flex; align-items: center; gap: 6px; margin-left: -4px; margin-right: -2px; }
.floor select { width: 62px; height: 27px; padding-left: 2px; background: linear-gradient(#000, #000) no-repeat right 4px top 13px / 5px 1px, linear-gradient(#000, #000) no-repeat right 5px top 14px / 3px 1px, linear-gradient(#000, #000) no-repeat right 6px top 15px / 1px 1px, #fff; }
.toolbar2 .move { gap: 8px; padding-left: 2px; }

/* module navigation */
.main { flex: 1; min-height: 0; display: flex; padding: 1px 0 3px; }
.nav { width: 165px; display: flex; flex-direction: column; flex: none; }
.nav-head { display: flex; align-items: center; gap: 6px; height: 15px; padding-right: 3px; color: #fff; background: #0054e3; flex: none; margin-bottom: 2px; }
.nav-head h2 { flex: 1; font-size: 13px; line-height: 15px; }
.bar { height: 22px; border: 1px solid #a0a0a0; background: #efefef; font-family: var(--song); flex: none; }
.expand { display: flex; gap: 5px; align-items: center; height: 27px; padding-left: 6px; background: linear-gradient(#fff, #ececec); border-left: 1px solid #ddd; flex: none; }
.tree { flex: 1; min-height: 0; display: flex; margin: 0 1px 1px 2px; border: 1px solid #828790; background: #fff; padding: 1px 1px 0 0; font-family: var(--song); overflow: hidden; }
.tree ul { flex: 1; min-width: 0; overflow: hidden; }
.tree li { display: flex; align-items: center; height: 16px; white-space: nowrap; gap: 5px; }
.leaf { padding-left: 42px; background: var(--dots-v) no-repeat 12px 0 / 1px 16px, var(--dots-v) no-repeat 31px 0 / 1px 16px, var(--dots-h) no-repeat 31px 8px / 11px 1px; }
.leaf.last { background: var(--dots-v) no-repeat 12px 0 / 1px 16px, var(--dots-v) no-repeat 31px 0 / 1px 8px, var(--dots-h) no-repeat 31px 8px / 11px 1px; }
.leaf.end { background: var(--dots-v) no-repeat 31px 0 / 1px 16px, var(--dots-h) no-repeat 31px 8px / 11px 1px; }
.tree .node { padding-left: 7px; background: var(--dots-h) no-repeat 20px 8px / 3px 1px; }
.node .i9 { margin-right: 2px; color: #333; }
.pages { margin-left: -3px; }
.cur { display: flex; align-items: center; gap: 5px; height: 16px; margin-left: -2px; padding: 0 5px 0 2px; background: #d9d9d9; }
.sb { width: 15px; display: flex; flex-direction: column; background: #f0f0f0; flex: none; }
.cap { height: 16px; display: grid; place-items: center; color: #505050; flex: none; }
.thumb { background: #cdcdcd; }
.sb-nav .pre { flex: 28; }
.sb-nav .thumb { flex: 409; }
.sb-nav .post { flex: 14; }
.sb-pv .thumb { flex: 314; }
.sb-pv .post { flex: 216; }

/* component list */
.work { flex: 1; min-width: 0; display: flex; flex-direction: column; margin-left: 6px; }
.panes { flex: 1; min-height: 0; display: flex; }
.parts { width: 183px; display: flex; flex-direction: column; padding-top: 4px; flex: none; }
.search { display: flex; align-items: center; height: 25px; padding-left: 1px; background: #fff; flex: none; }
.search input { width: 157px; height: 24px; padding: 0 2px 3px; border: 1px solid #7a7a7a; background: #fff; }
.search input::placeholder { color: #808080; opacity: 1; }
.search button { margin-left: 6px; }
.partlist { flex: 1; min-height: 0; overflow: hidden; border: 1px solid #828790; border-right-width: 2px; background: #fff; padding-top: 2px; font-family: var(--song); }
.partlist li { display: flex; height: 16px; padding-left: 40px; background: var(--dots-v) no-repeat 31px 0 / 1px 16px, var(--dots-h) no-repeat 31px 8px / 11px 1px; }
.partlist li.last { background: var(--dots-v) no-repeat 31px 0 / 1px 8px, var(--dots-h) no-repeat 31px 8px / 11px 1px; }
.partlist li.root { align-items: center; padding-left: 7px; background: var(--dots-h) no-repeat 20px 8px / 3px 1px; }
.root .i9 { color: #28b4e8; margin-right: 7px; }
.root .i16 { margin-right: 5px; }
.partlist span { display: flex; align-items: center; gap: 8px; height: 16px; padding: 0 3px; }
.partlist .sel { background: #316ac5; }

/* property editor */
.editor { flex: 1; min-width: 0; display: flex; flex-direction: column; margin: 0 2px 0 4px; }
.tab { align-self: flex-start; width: 64px; height: 20px; border: 1px solid #dcdcdc; border-bottom: 0; background: #fff; flex: none; }
.sheet { flex: 1; min-height: 0; display: flex; padding: 3px 2px; border: 1px solid #dcdcdc; background: #fff; }
.frame { flex: 1; min-width: 0; display: flex; padding: 0 1px 0 2px; border: 1px solid #a0a0a0; background: #fff; }
.gridwrap { flex: 1; min-width: 0; overflow: hidden; padding-top: 1px; }
.props { table-layout: fixed; width: 369px; border-collapse: separate; border-spacing: 0; font-family: var(--song); }
.c-no { width: 21px; }
.c-name { width: 191px; }
.c-val { width: 126px; }
.c-add { width: 31px; }
.props th, .props td { height: 19px; padding: 0 0 0 1px; border-right: 1px solid #c0c0c0; border-bottom: 1px solid #c0c0c0; line-height: 16px; font-weight: normal; text-align: left; white-space: nowrap; }
.props th { padding: 0; text-align: center; background: linear-gradient(to right, #fcfcfc, #ededed); }
.props thead th { height: 23px; background: linear-gradient(#fcfcfc, #ededed); font-family: var(--ui); }
.props thead .hot { background: linear-gradient(#fbd9a0, #eebd5c); color: #5a0050; }
.props td:nth-child(2) { padding-left: 19px; }
.props td:nth-child(4) { padding: 0 0 0 9px; }
.props .key { color: #00f; }
.props .dim { color: #808080; }
.props td.fold { padding-left: 2px; }
.fold button { width: 13px; height: 13px; margin-right: 4px; padding: 1px; border: 1px solid #b0b0b0; vertical-align: middle; }
.props .sub td:nth-child(2) { padding-left: 29px; background: linear-gradient(#b0b0b0, #b0b0b0) no-repeat 8px 0 / 1px 100%, linear-gradient(#b0b0b0, #b0b0b0) no-repeat 9px 9px / 16px 1px; }
.props .subend td:nth-child(2) { background-size: 1px 9px, 16px 1px; }
.props .active th { background: #ffcf80; color: #5a0050; }
.props .active td:nth-child(2) { background-color: #0078d7; color: #fff; }
.active td:nth-child(3) { background: #d8e8f7; }
.props input { appearance: none; display: block; width: 13px; height: 13px; border: 1px solid #222; background: #fff; }
.mark { display: inline-block; width: 12px; height: 10px; margin: 0 1px; vertical-align: -1px; }
.previews { width: 269px; flex: none; overflow: hidden; background: #d7e2f0; }
.pv { border: 1px solid #4c4c4c; outline: 1px solid #fff; outline-offset: -2px; padding: 11px 7px 6px; background: linear-gradient(#bccad8, #d7e2f0 30px); }
.pv figcaption { height: 19px; color: #999; }
.pv svg { width: 100%; background: #000; border: 1px solid #fff; border-right-color: #a0a0a0; border-bottom-color: #a0a0a0; }
.dimtext { fill: #fff; font: 17px "Liberation Serif", serif; text-anchor: middle; }

/* status line */
.status { display: flex; gap: 3px; height: 20px; font-family: var(--song); flex: none; }
.status span { padding-left: 1px; line-height: 18px; border: 1px solid #dadada; background: linear-gradient(#fff, #f1f1f1); white-space: nowrap; }
.s1 { width: 147px; }
.s2 { width: 77px; }
.s3 { width: 97px; }
.s4 { width: 47px; }
.s5 { flex: 1; }
.s6 { width: 70px; }

/* task bar */
.taskbar { display: flex; height: 40px; background: #000a0e; color: #fff; flex: none; }
.start { width: 48px; display: grid; place-items: center; background: #000; }
.cortana { width: 344px; display: flex; align-items: center; padding: 0 14px 0 8px; background: #333; }
.cortana input { flex: 1; min-width: 0; margin-left: 6px; font-size: 14px; line-height: 20px; }
.cortana input::placeholder { color: #9c9c9c; opacity: 1; }
.apps { display: flex; gap: 1px; padding-left: 2px; }
.apps button { width: 48px; display: grid; place-items: center; }
.apps .far { margin-left: 5px; }
.apps .run { background: linear-gradient(#76b9ed, #76b9ed) no-repeat center bottom / 40px 2px; }
.apps .on { background: linear-gradient(#76b9ed, #76b9ed) no-repeat center bottom / 48px 2px, #30383c; }
.tray { margin-left: auto; display: flex; align-items: center; gap: 8px; }
.tray b { font-size: 13px; }
.tray time { width: 78px; display: flex; flex-direction: column; align-items: center; line-height: 19px; font-family: "Open Sans", sans-serif; }
.tray .note { margin-right: 13px; }
.note text { fill: #fff; font: bold 11px "Noto Sans", sans-serif; }

/* hand-drawn marks above the window */
.ink { position: absolute; left: 0; top: 0; pointer-events: none; }
```
